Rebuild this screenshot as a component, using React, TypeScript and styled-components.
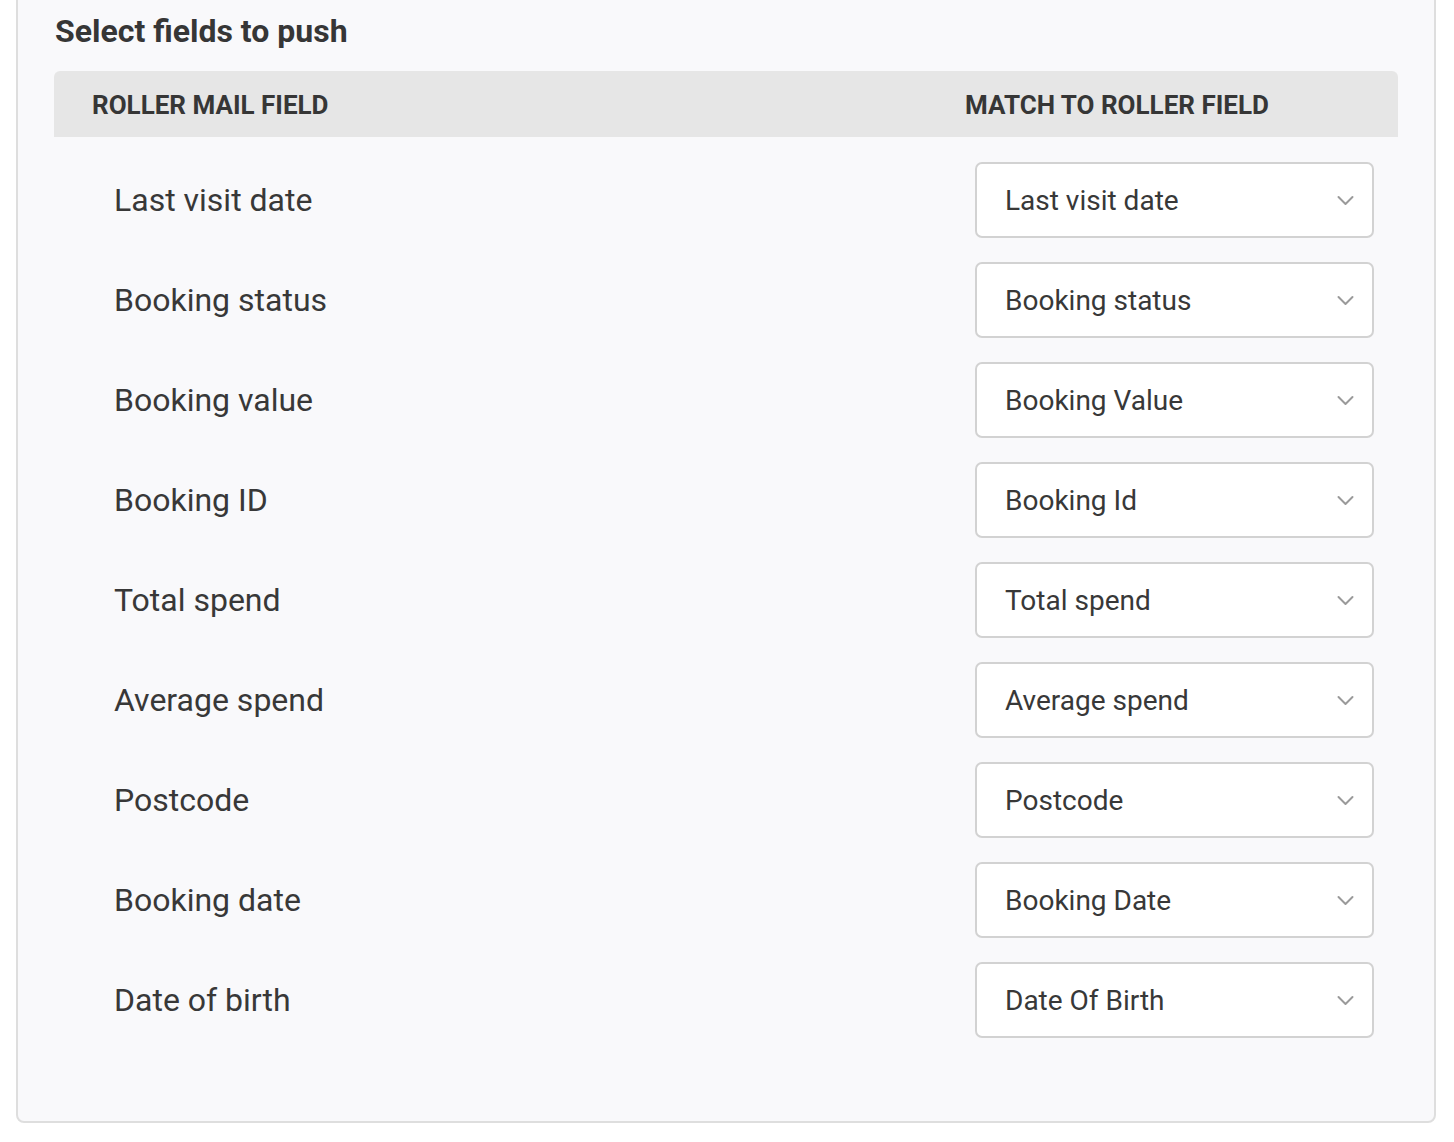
import styled, { createGlobalStyle } from "styled-components";

type fieldRow = {
    label: string;
    value: string;
};

const rows: fieldRow[] = [
    { label: "Last visit date", value: "Last visit date" },
    { label: "Booking status", value: "Booking status" },
    { label: "Booking value", value: "Booking Value" },
    { label: "Booking ID", value: "Booking Id" },
    { label: "Total spend", value: "Total spend" },
    { label: "Average spend", value: "Average spend" },
    { label: "Postcode", value: "Postcode" },
    { label: "Booking date", value: "Booking Date" },
    { label: "Date of birth", value: "Date Of Birth" },
];

function Chevron() {
    return (
        <svg width="17" height="11" viewBox="0 0 17 11" fill="none">
            <polyline
                points="1.5,2 8.5,9 15.5,2"
                stroke="#9a9a9a"
                strokeWidth="2"
                strokeLinecap="round"
                strokeLinejoin="round"
            />
        </svg>
    );
}

function App() {
    return (
        <>
            <GlobalStyle />
            <Page>
                <Panel>
                    <Heading>Select fields to push</Heading>
                    <FieldTable>
                        <HeaderRow>
                            <HeaderCell $first>Roller mail field</HeaderCell>
                            <HeaderCell>Match to roller field</HeaderCell>
                        </HeaderRow>
                        {rows.map((row) => (
                            <FieldRow key={row.label}>
                                <FieldLabel>{row.label}</FieldLabel>
                                <SelectCell>
                                    <SelectBox>
                                        <span>{row.value}</span>
                                        <Chevron />
                                    </SelectBox>
                                </SelectCell>
                            </FieldRow>
                        ))}
                    </FieldTable>
                </Panel>
            </Page>
        </>
    );
}

export default App;

const GlobalStyle = createGlobalStyle`
    html, body {
        margin: 0;
        padding: 0;
        background: #ffffff;
        font-family: Roboto, "Liberation Sans", sans-serif;
        color: #383838;
    }
`;

const Page = styled.div`
    padding: 0 18px 19px 16px;
    overflow: hidden;
`;

const Panel = styled.div`
    margin-top: -22px;
    padding: 34px 36px 71px 36px;
    background-color: #f9f9fb;
    border: 2px solid #dedede;
    border-radius: 8px;
`;

const Heading = styled.h2`
    margin: 0 0 23px;
    font-size: 32px;
    line-height: 34px;
    font-weight: 700;
    color: #363636;
    padding-left: 1px;
`;

const FieldTable = styled.div`
    display: flex;
    flex-direction: column;
`;

const HeaderRow = styled.div`
    display: grid;
    grid-template-columns: 1fr 433px;
    align-items: center;
    height: 66px;
    padding-top: 2px;
    box-sizing: border-box;
    background-color: #e6e6e6;
    border-radius: 6px 6px 0 0;
    margin-bottom: 13px;
`;

const HeaderCell = styled.div<{ $first?: boolean }>`
    padding-left: ${(p) => (p.$first ? "38px" : "0")};
    font-size: 26px;
    font-weight: 700;
    text-transform: uppercase;
    color: #363636;
`;

const FieldRow = styled.div`
    display: grid;
    grid-template-columns: 1fr 433px;
    align-items: center;
    height: 100px;
`;

const FieldLabel = styled.div`
    padding-left: 60px;
    font-size: 32px;
    color: #383838;
`;

const SelectCell = styled.div`
    padding: 0 24px 0 10px;
`;

const SelectBox = styled.div`
    display: flex;
    align-items: center;
    justify-content: space-between;
    height: 76px;
    box-sizing: border-box;
    padding: 0 18px 0 28px;
    background-color: #ffffff;
    border: 2px solid #d2d2d2;
    border-radius: 7px;
    font-size: 28px;
    color: #383838;
`;
